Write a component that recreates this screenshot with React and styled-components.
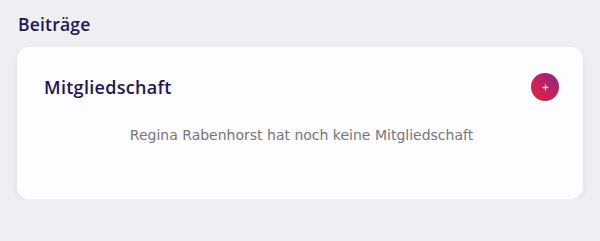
import * as React from 'react';
import styled, {createGlobalStyle} from 'styled-components';

const GlobalStyle = createGlobalStyle`
  html, body {
    margin: 0;
    padding: 0;
    background: #efeef3;
  }
  body {
    font-family: 'Open Sans', 'Liberation Sans', sans-serif;
  }
`;

const Page = styled.div`
  padding: 12px 17px 0 17px;
`;

const SectionTitle = styled.h2`
  margin: 0 0 11px 1px;
  font-size: 17.5px;
  font-weight: 600;
  line-height: 24px;
  color: #1d1853;
  letter-spacing: 0.2px;
`;

const Card = styled.div`
  height: 152px;
  box-sizing: border-box;
  padding: 26px 24px 0 27px;
  background: #fdfcfe;
  border-radius: 12px;
  box-shadow: 0 2px 6px rgba(40, 30, 80, 0.08);
`;

const CardHeader = styled.div`
  display: flex;
  align-items: center;
  justify-content: space-between;
  height: 28px;
`;

const CardTitle = styled.h3`
  margin: 0;
  font-size: 18px;
  font-weight: 600;
  color: #1d1853;
  letter-spacing: 0.3px;
`;

const AddButton = styled.button`
  width: 28px;
  height: 28px;
  padding: 0;
  border: none;
  border-radius: 50%;
  background: linear-gradient(225deg, #7e2a8c 0%, #c8215a 55%, #e0203f 100%);
  display: flex;
  align-items: center;
  justify-content: center;
  cursor: pointer;
`;

const EmptyText = styled.p`
  margin: 26px 0 0 0;
  text-align: center;
  font-family: 'DejaVu Sans', 'Liberation Sans', sans-serif;
  font-size: 14px;
  color: #78777c;
`;

const PlusIcon = () => (
    <svg width="7" height="7" viewBox="0 0 7 7">
        <path d="M3.5 0.5v6M0.5 3.5h6" stroke="#f6d3e0" strokeWidth="1.3" />
    </svg>
);

export default function App() {
    return (
        <Page>
            <GlobalStyle/>
            <SectionTitle>Beiträge</SectionTitle>
            <Card>
                <CardHeader>
                    <CardTitle>Mitgliedschaft</CardTitle>
                    <AddButton aria-label="Mitgliedschaft hinzufügen"><PlusIcon/></AddButton>
                </CardHeader>
                <EmptyText>Regina Rabenhorst hat noch keine Mitgliedschaft</EmptyText>
            </Card>
        </Page>
    );
}
